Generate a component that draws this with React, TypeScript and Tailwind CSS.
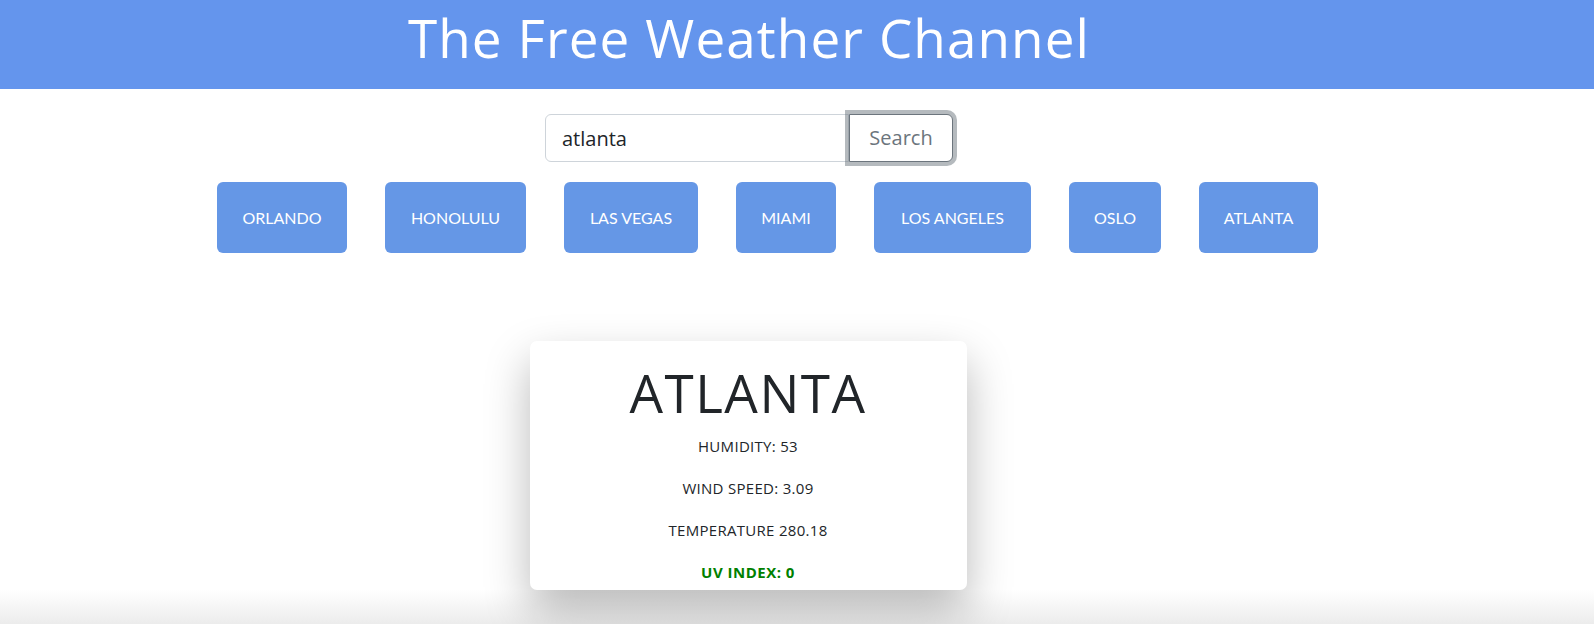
import React from "react";

const cities: [string, number][] = [
  ["ORLANDO", 130],
  ["HONOLULU", 141],
  ["LAS VEGAS", 134],
  ["MIAMI", 100],
  ["LOS ANGELES", 157],
  ["OSLO", 92],
  ["ATLANTA", 119],
];

export default function App() {
  return (
    <div className="min-h-[624px] bg-white flex flex-col" style={{ fontFamily: '"Open Sans", "Liberation Sans", sans-serif' }}>
      <header className="h-[89px] bg-[#6495ed] flex items-start justify-center pr-[96px]">
        <h1 className="text-white text-[53px] leading-none font-normal mt-[11px] tracking-[1.1px]">The Free Weather Channel</h1>
      </header>

      <div className="flex justify-center pr-[96px] mt-[25px]">
        <div className="flex h-[48px] w-[408px]">
          <input
            readOnly
            value="atlanta"
            className="flex-1 min-w-0 h-full border border-[#ced4da] rounded-l-[6px] px-4 text-[20px] text-[#212529] outline-none bg-white"
          />
          <button className="h-full w-[104px] border border-[#6c757d] rounded-r-[6px] text-[20px] text-[#6c757d] bg-white shadow-[0_0_0_4px_rgba(108,117,125,0.5)] relative z-10">
            Search
          </button>
        </div>
      </div>

      <div className="flex justify-start pl-[217px] mt-[20px]">
        <div className="flex gap-[38px]">
          {cities.map(([c, w]) => (
            <button
              key={c}
              className="h-[71px] rounded-[6px] bg-[#6597e6] text-white text-[16px] flex items-center justify-center"
              style={{ width: w, fontFamily: 'Lato, "Liberation Sans", sans-serif' }}
            >
              {c}
            </button>
          ))}
        </div>
      </div>

      <div className="flex justify-center pr-[98px] mt-[88px]">
        <div className="w-[437px] h-[249px] bg-white rounded-[7px] shadow-[0_20px_45px_rgba(0,0,0,0.28)] flex flex-col items-center relative z-10">
          <div className="text-[53px] leading-none text-[#212529] mt-[25px] tracking-[1.5px]">ATLANTA</div>
          <p className="text-[15px] leading-[20px] text-[#212529] mt-[17px] tracking-[0.3px]">HUMIDITY: 53</p>
          <p className="text-[15px] leading-[20px] text-[#212529] mt-[22px] tracking-[0.3px]">WIND SPEED: 3.09</p>
          <p className="text-[15px] leading-[20px] text-[#212529] mt-[22px] tracking-[0.3px]">TEMPERATURE 280.18</p>
          <p className="text-[15px] leading-[20px] text-[#008000] font-bold mt-[22px] tracking-[0.5px]">UV INDEX: 0</p>
        </div>
      </div>
      <div className="flex-1 bg-gradient-to-b from-white to-[#ececec]" />
    </div>
  );
}
